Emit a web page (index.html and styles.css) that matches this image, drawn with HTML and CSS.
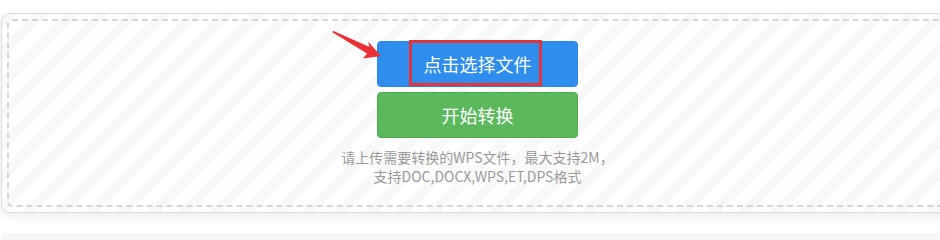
FILE: index.html
```html
<!DOCTYPE html>
<html lang="zh-CN">
<head>
  <meta charset="utf-8" />
  <meta name="viewport" content="width=device-width, initial-scale=1" />
  <title>WPS转换</title>
  <link rel="stylesheet" href="styles.css">
</head>
<body>
  <main class="page">
    <section class="upload">
      <div class="drop">
        <div class="actions">
          <svg class="pointer" width="52" height="32" viewBox="330 29 52 32" aria-hidden="true">
            <polygon points="332,32 333.5,31 369.5,47 368,41.5 381,56 363,58.5 367,53.5" fill="#ea2f35" />
          </svg>
          <button class="btn btn-blue" type="button">
            点击选择文件
            <span class="mark"></span>
          </button>
          <button class="btn btn-green" type="button">开始转换</button>
        </div>
        <p class="tip">请上传需要转换的WPS文件，最大支持2M，<br>支持DOC,DOCX,WPS,ET,DPS格式</p>
      </div>
    </section>
    <div class="strip"></div>
  </main>
</body>
</html>
```

FILE: styles.css
```css
* { box-sizing: border-box; }
html, body {
  margin: 0;
  height: 100%;
  background: #fff;
  font-family: "Noto Sans CJK SC", "Microsoft YaHei", sans-serif;
  overflow: hidden;
}
.page {
  width: 940px;
  height: 240px;
  padding: 13px 0 0 1px;
  overflow: hidden;
}
.upload {
  width: 953px;
  height: 200px;
  padding: 5px;
  border: 1px solid #dcdcdc;
  border-radius: 8px;
  background: repeating-linear-gradient(135deg, #f8f8f8 0 10px, #fff 10px 22px);
  box-shadow: 0 4px 10px rgba(0, 0, 0, 0.07);
}
.drop {
  height: 100%;
  border: 2px dashed #d6d6d6;
  border-radius: 5px;
  display: flex;
  flex-direction: column;
  align-items: center;
  padding-top: 20px;
}
.actions {
  position: relative;
  display: flex;
  flex-direction: column;
  gap: 5px;
}
.pointer {
  position: absolute;
  left: -47px;
  top: -12px;
  z-index: 2;
}
.btn {
  position: relative;
  width: 201px;
  height: 46px;
  border-radius: 4px;
  border: 1px solid transparent;
  color: #fff;
  font-family: inherit;
  font-size: 18px;
  padding: 0;
  cursor: pointer;
}
.btn-blue { background: #2e8ded; border-color: #2a86e4; }
.btn-green { background: #5cb85c; border-color: #4cae4c; }
.mark {
  position: absolute;
  left: 31px;
  top: -2px;
  width: 133px;
  height: 46px;
  border: 3px solid #e0353c;
}
.tip {
  margin: 10px 0 0;
  font-size: 14px;
  line-height: 19px;
  color: #9a9a9a;
  text-align: center;
}
.strip {
  margin-top: 20px;
  height: 10px;
  background: #f7f7f7;
}
```
